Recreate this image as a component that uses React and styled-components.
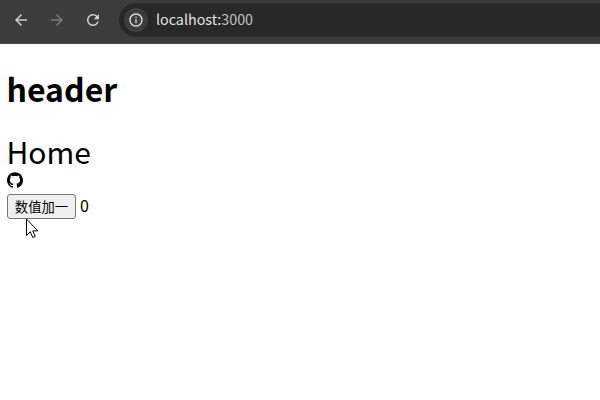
import React from 'react';
import styled, { createGlobalStyle } from 'styled-components';
import { SiGithub } from 'react-icons/si';
import { MdArrowBack, MdArrowForward, MdRefresh, MdInfoOutline } from 'react-icons/md';

const GlobalStyle = createGlobalStyle`
  html, body { margin: 0; background: #fff; overflow: hidden; }
  body, button { font-family: "Noto Sans CJK SC", sans-serif; }
`;

const Window = styled.div`
  position: relative;
  width: 600px;
  height: 400px;
  overflow: hidden;
  color: #000;
`;

const Toolbar = styled.header`
  display: flex;
  align-items: flex-start;
  box-sizing: border-box;
  height: 44px;
  padding: 3px 0 0 12px;
  background: #3c3c3c;
  border-bottom: 1px solid #4b4949;
`;

const NavButton = styled.span`
  display: flex;
  width: 36px;
  height: 34px;
  align-items: center;
  color: ${({ $muted }) => ($muted ? '#77777f' : '#d2d0c7')};
  svg { width: 18px; height: 18px; stroke: none; }
`;

const AddressBar = styled.div`
  display: flex;
  flex: 1;
  height: 34px;
  box-sizing: border-box;
  align-items: center;
  margin-left: -1px;
  padding-left: 5px;
  border-radius: 17px 0 0 17px;
  background: #282828;
`;

const SiteInfo = styled.span`
  display: grid;
  place-items: center;
  width: 24px;
  height: 24px;
  border-radius: 50%;
  background: #3c3c3c;
  color: #e2e2df;
`;

const Url = styled.span`
  margin: 0 0 2px 8px;
  font-size: 14.3px;
  line-height: 20px;
  color: #e4e4e4;
`;

const Port = styled.span`
  color: #c3c3c3;
`;

const Page = styled.main`
  padding-left: 7px;
`;

const Title = styled.h1`
  margin: 20px 0 0 -0.5px;
  font-size: 32px;
  line-height: 48px;
  font-weight: 700;
`;

const Heading = styled.div`
  margin: 15px 0 0 -0.5px;
  font-size: 30px;
  line-height: 48px;
`;

const Logo = styled.div`
  display: flex;
  height: 16px;
  margin-top: -3px;
`;

const Counter = styled.div`
  display: flex;
  align-items: center;
  gap: 4px;
  margin-top: 6px;
  font-size: 16px;
  line-height: 23px;
`;

const Count = styled.span`
  margin-bottom: 2px;
`;

const AddButton = styled.button`
  box-sizing: border-box;
  width: 69px;
  height: 25px;
  padding: 0;
  border: 1px solid #767676;
  border-radius: 3px;
  background: #efefef;
  color: #000;
  font-size: 13.33px;
  line-height: 23px;
`;

const Pointer = styled.svg`
  position: absolute;
  left: 26px;
  top: 218px;
`;

export default function App() {
  return (
    <Window>
      <GlobalStyle />
      <Toolbar>
        <NavButton><MdArrowBack /></NavButton>
        <NavButton $muted><MdArrowForward /></NavButton>
        <NavButton><MdRefresh /></NavButton>
        <AddressBar>
          <SiteInfo><MdInfoOutline size={16} /></SiteInfo>
          <Url>localhost:<Port>3000</Port></Url>
        </AddressBar>
      </Toolbar>
      <Page>
        <Title>header</Title>
        <Heading>Home</Heading>
        <Logo><SiGithub size={16} /></Logo>
        <Counter>
          <AddButton>数值加一</AddButton>
          <Count>0</Count>
        </Counter>
      </Page>
      <Pointer width="13" height="21" viewBox="0 0 13 21">
        <path d="M.5 1v16.5l3.8-3.7 2.5 5.7 2.5-1.1-2.5-5.5h5z" fill="#fff" stroke="#000" strokeWidth="1" />
      </Pointer>
    </Window>
  );
}
